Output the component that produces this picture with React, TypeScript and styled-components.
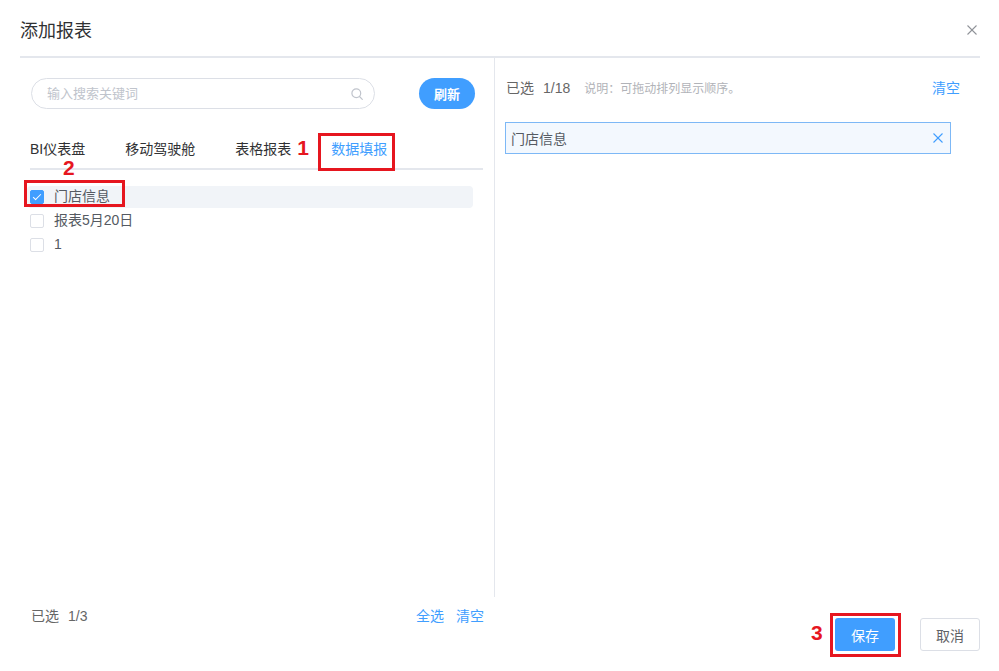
import React from "react";
import styled, { createGlobalStyle } from "styled-components";

const GlobalStyle = createGlobalStyle`
  html, body {
    margin: 0;
    padding: 0;
    background: #ffffff;
  }
  body {
    font-family: "Liberation Sans", "Noto Sans CJK SC", sans-serif;
    color: #303133;
  }
  * {
    box-sizing: border-box;
  }
`;

type Tab = { key: string; label: string };

const tabs: Tab[] = [
    { key: "bi", label: "BI仪表盘" },
    { key: "mobile", label: "移动驾驶舱" },
    { key: "table", label: "表格报表" },
    { key: "fill", label: "数据填报" },
];

type Report = { id: string; name: string; checked: boolean };

const reports: Report[] = [
    { id: "r1", name: "门店信息", checked: true },
    { id: "r2", name: "报表5月20日", checked: false },
    { id: "r3", name: "1", checked: false },
];

function SearchIcon() {
    return (
        <svg width="12" height="12" viewBox="0 0 12 12" fill="none">
            <circle cx="5.3" cy="5.3" r="4.4" stroke="#c0c4cc" strokeWidth="1.2" />
            <line x1="8.5" y1="8.5" x2="11.3" y2="11.3" stroke="#c0c4cc" strokeWidth="1.2" strokeLinecap="round" />
        </svg>
    );
}

function CloseIcon({ color }: { color: string }) {
    return (
        <svg width="10" height="10" viewBox="0 0 10 10" fill="none">
            <line x1="0.5" y1="0.5" x2="9.5" y2="9.5" stroke={color} strokeWidth="1.1" />
            <line x1="9.5" y1="0.5" x2="0.5" y2="9.5" stroke={color} strokeWidth="1.1" />
        </svg>
    );
}

export default function App() {
    const activeTab = "fill";
    const checkedCount = reports.filter((r) => r.checked).length;

    return (
        <>
            <GlobalStyle />
            <Dialog>
                <Header>
                    <Title>添加报表</Title>
                    <CloseButton>
                        <CloseIcon color="#909399" />
                    </CloseButton>
                </Header>

                <Body>
                    <LeftMain>
                        <SearchRow>
                            <SearchBox>
                                <SearchInput placeholder="输入搜索关键词" />
                                <SearchIcon />
                            </SearchBox>
                            <RefreshButton>刷新</RefreshButton>
                        </SearchRow>

                        <Tabs>
                            {tabs.map((tab) => (
                                <TabItem key={tab.key} $active={tab.key === activeTab}>
                                    {tab.label}
                                    {tab.key === activeTab && (
                                        <>
                                            <Callout $top={3} $left={-13} $width={77} $height={38} />
                                            <Badge $top={7} $left={-34}>1</Badge>
                                        </>
                                    )}
                                </TabItem>
                            ))}
                        </Tabs>

                        <List>
                            {reports.map((report, index) => (
                                <ListRow key={report.id} $selected={report.checked}>
                                    <Checkbox $checked={report.checked} />
                                    <ItemLabel>{report.name}</ItemLabel>
                                    {index === 0 && (
                                        <>
                                            <Callout $top={-6} $left={-3} $width={101} $height={27} />
                                            <Badge $top={-29} $left={36}>2</Badge>
                                        </>
                                    )}
                                </ListRow>
                            ))}
                        </List>
                    </LeftMain>

                    <RightMain>
                        <SelectedHeader>
                            <Count>
                                已选<CountNumber>{checkedCount}/18</CountNumber>
                            </Count>
                            <Hint>说明：可拖动排列显示顺序。</Hint>
                            <TextLink $pushRight>清空</TextLink>
                        </SelectedHeader>

                        <SelectedItem>
                            <SelectedName>门店信息</SelectedName>
                            <CloseIcon color="#409eff" />
                        </SelectedItem>
                    </RightMain>

                    <LeftFooter>
                        <Count>
                            已选<CountNumber>{checkedCount}/{reports.length}</CountNumber>
                        </Count>
                        <FooterLinks>
                            <TextLink>全选</TextLink>
                            <TextLink>清空</TextLink>
                        </FooterLinks>
                    </LeftFooter>

                    <DialogFooter>
                        <PrimaryButton>
                            保存
                            <Callout $top={-5} $left={-5} $width={71} $height={44} />
                            <Badge $top={4} $left={-24}>3</Badge>
                        </PrimaryButton>
                        <PlainButton>取消</PlainButton>
                    </DialogFooter>
                </Body>
            </Dialog>
        </>
    );
}

// styles

const Dialog = styled.div`
    width: 999px;
    height: 671px;
    padding: 0 19px 0 20px;
    display: flex;
    flex-direction: column;
    background: #ffffff;
`;

const Header = styled.div`
    height: 58px;
    padding-top: 19px;
    display: flex;
    justify-content: space-between;
    align-items: flex-start;
    border-bottom: 2px solid #e4e7ed;
`;

const Title = styled.div`
    font-size: 18px;
    line-height: 24px;
    color: #303133;
`;

const CloseButton = styled.div`
    width: 10px;
    height: 10px;
    margin: 6px 3px 0 0;
    display: flex;
    cursor: pointer;
`;

const Body = styled.div`
    flex: 1;
    display: grid;
    grid-template-columns: 475px 1fr;
    grid-template-rows: 539px 1fr;
`;

const LeftMain = styled.div`
    padding: 20px 10px 0 10px;
    border-right: 1px solid #e4e7ed;
`;

const SearchRow = styled.div`
    display: flex;
    align-items: center;
`;

const SearchBox = styled.div`
    width: 344px;
    height: 31px;
    margin-left: 1px;
    padding: 0 11px 0 15px;
    display: flex;
    align-items: center;
    border: 1px solid #dcdfe6;
    border-radius: 16px;
`;

const SearchInput = styled.input`
    flex: 1;
    min-width: 0;
    border: none;
    outline: none;
    padding: 0;
    font-family: inherit;
    font-size: 13px;
    color: #606266;
    background: transparent;

    &::placeholder {
        color: #c0c4cc;
    }
`;

const RefreshButton = styled.button`
    width: 56px;
    height: 31px;
    margin-left: auto;
    margin-right: 9px;
    border: none;
    border-radius: 16px;
    background: #409eff;
    color: #ffffff;
    font-family: inherit;
    font-size: 13px;
    font-weight: 600;
    padding: 0;
    cursor: pointer;
`;

const Tabs = styled.div`
    height: 40px;
    margin: 21px 1px 0 0;
    display: flex;
    border-bottom: 2px solid #e4e7ed;
`;

const TabItem = styled.div<{ $active: boolean }>`
    position: relative;
    margin-right: 40px;
    font-size: 14px;
    line-height: 38px;
    color: ${(p) => (p.$active ? "#409eff" : "#303133")};
    cursor: pointer;
`;

const List = styled.div`
    margin-top: 16px;
`;

const ListRow = styled.div<{ $selected: boolean }>`
    position: relative;
    width: 446px;
    height: 22px;
    margin: 0 0 2px -3px;
    padding-left: 3px;
    display: flex;
    align-items: center;
    border-radius: 4px;
    background: ${(p) => (p.$selected ? "#f1f4f8" : "transparent")};
`;

const Checkbox = styled.span<{ $checked: boolean }>`
    position: relative;
    width: 14px;
    height: 14px;
    margin-right: 10px;
    flex-shrink: 0;
    border-radius: 2px;
    border: 1px solid ${(p) => (p.$checked ? "#409eff" : "#dcdfe6")};
    background: ${(p) => (p.$checked ? "#409eff" : "#ffffff")};

    &::after {
        content: "";
        display: ${(p) => (p.$checked ? "block" : "none")};
        position: absolute;
        left: 4px;
        top: 1px;
        width: 3px;
        height: 7px;
        border: 1px solid #ffffff;
        border-left: 0;
        border-top: 0;
        transform: rotate(45deg);
    }
`;

const ItemLabel = styled.span`
    font-size: 14px;
    line-height: 20px;
    margin-top: -2px;
    color: #555a62;
`;

const RightMain = styled.div`
    padding: 20px 20px 0 11px;
`;

const SelectedHeader = styled.div`
    display: flex;
    align-items: baseline;
    line-height: 20px;
`;

const Count = styled.span`
    font-size: 14px;
    line-height: 20px;
    color: #666666;
`;

const CountNumber = styled.span`
    margin-left: 9px;
`;

const Hint = styled.span`
    margin-left: 14px;
    font-size: 12px;
    color: #b1b3b8;
`;

const TextLink = styled.span<{ $pushRight?: boolean }>`
    margin-left: ${(p) => (p.$pushRight ? "auto" : "0")};
    font-size: 14px;
    line-height: 20px;
    color: #409eff;
    cursor: pointer;
`;

const SelectedItem = styled.div`
    width: 446px;
    height: 32px;
    margin: 23px 0 0 -1px;
    padding: 0 7px 0 5px;
    display: flex;
    align-items: center;
    justify-content: space-between;
    border: 1px solid #7db8f6;
    background: #f3f8fe;
`;

const SelectedName = styled.span`
    font-size: 14px;
    color: #555a62;
`;

const LeftFooter = styled.div`
    padding: 9px 11px 0 11px;
    display: flex;
    justify-content: space-between;
    align-items: flex-start;
`;

const FooterLinks = styled.div`
    display: flex;
    gap: 12px;
`;

const DialogFooter = styled.div`
    padding-top: 21px;
    display: flex;
    justify-content: flex-end;
    align-items: flex-start;
    gap: 25px;
`;

const PrimaryButton = styled.button`
    position: relative;
    width: 60px;
    height: 33px;
    padding: 0;
    border: none;
    border-radius: 3px;
    background: #409eff;
    color: #ffffff;
    font-family: inherit;
    font-size: 14px;
    cursor: pointer;
`;

const PlainButton = styled(PrimaryButton)`
    border: 1px solid #dcdfe6;
    background: #ffffff;
    color: #606266;
`;

// annotations drawn over the screenshot

const Callout = styled.span<{ $top: number; $left: number; $width: number; $height: number }>`
    position: absolute;
    top: ${(p) => p.$top}px;
    left: ${(p) => p.$left}px;
    width: ${(p) => p.$width}px;
    height: ${(p) => p.$height}px;
    border: 3px solid #e6161f;
    pointer-events: none;
`;

const Badge = styled.span<{ $top: number; $left: number }>`
    position: absolute;
    top: ${(p) => p.$top}px;
    left: ${(p) => p.$left}px;
    font-family: "Liberation Sans", sans-serif;
    font-size: 21px;
    font-weight: 700;
    line-height: 1;
    color: #e6161f;
    pointer-events: none;
`;
